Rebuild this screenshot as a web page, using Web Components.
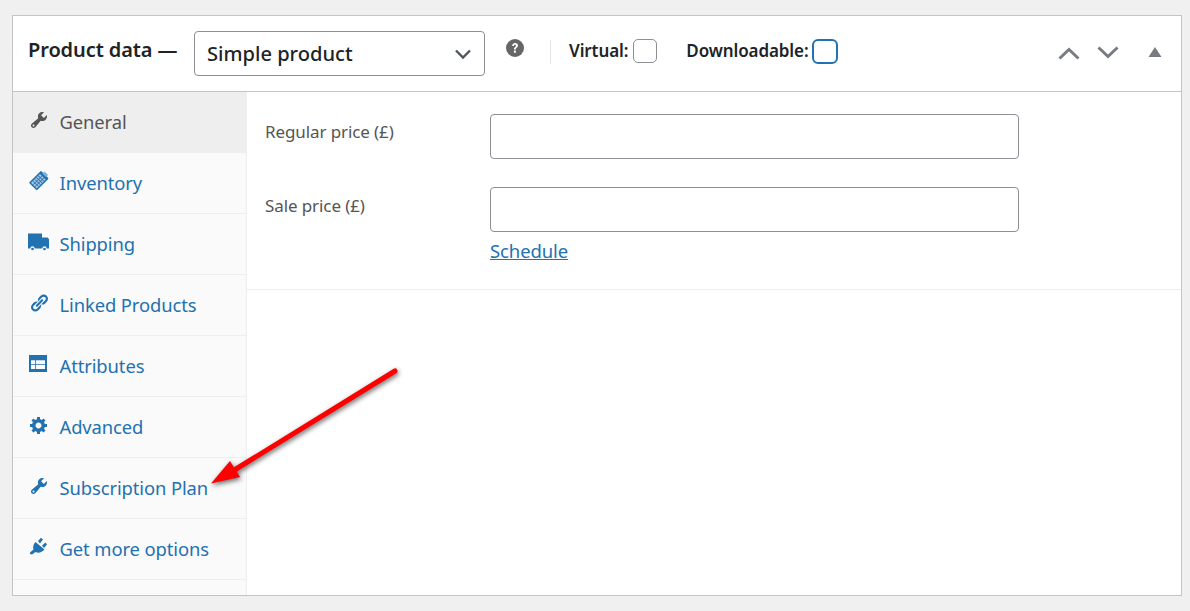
<!DOCTYPE html>
<html><head><meta charset="utf-8">
<style>
html,body{margin:0;padding:0;height:611px;overflow:hidden;background:#f0f0f1;}
body{font-family:"Noto Sans","Open Sans",sans-serif;}
</style></head><body>
<template id="tab-t"><style>
:host{display:flex;box-sizing:border-box;height:61px;align-items:flex-start;padding:0 0 0 16px;border-bottom:1px solid #eee;color:#2271b1;background:#fafafa;font-size:18.4px;}
:host([active]){background:#eee;color:#555;border-bottom-color:#eee}
.i{width:20px;height:20px;margin-top:18px;margin-right:10.5px;flex:none;fill:currentColor;display:block;overflow:visible}
.l{line-height:26px;margin-top:17px;white-space:nowrap;letter-spacing:-.1px}
</style><svg class="i" viewBox="0 0 20 20"></svg><span class="l"><slot></slot></span></template>
<template id="panel-t"><style>
:host{display:block;position:absolute;left:12px;top:15px;width:1170px;height:581px;box-sizing:border-box;border:1px solid #c3c4c7;background:#fff;overflow:visible}
</style><slot></slot></template>
<template id="hdr-t"><style>
:host{display:flex;align-items:flex-start;box-sizing:border-box;height:76px;border-bottom:1px solid #c3c4c7;padding-left:15px;color:#1d2327;background:#fff}
.t{font-size:20px;font-weight:600;line-height:28px;margin-top:20px;white-space:nowrap;letter-spacing:-.1px;width:166px;flex:none}
.sel{box-sizing:border-box;width:291px;height:45px;margin-top:15px;border:1px solid #8c8f94;border-radius:4px;display:flex;align-items:center;padding-left:12px;font-size:20.1px;font-weight:500;justify-content:space-between;flex:none}
.sel svg{margin-right:12px}
.q{margin:23px 0 0 21px;flex:none}
.sep{width:1px;height:24px;background:#e5e5e5;margin:24px 18px 0 26px;flex:none}
.o{display:flex;align-items:center;font-size:17px;font-weight:600;margin-top:23px;height:24px;white-space:nowrap;letter-spacing:-.1px}
.o>span:first-child{margin-top:-2px}
.c{box-sizing:border-box;width:24px;height:24px;border:1px solid #8c8f94;border-radius:5px;margin-left:5px;background:#fff;flex:none}
.c.f{border:2px solid #2271b1;width:26px;height:25px;border-radius:6px;margin-left:4px}
.o.b{margin-left:29px}
.ctl{display:flex;margin-left:auto;margin-right:19px;margin-top:30px}
.ctl svg{display:block}
</style>
<span class="t">Product data —</span>
<div class="sel"><span>Simple product</span><svg width="18" height="12" viewBox="0 0 18 12"><path d="M2 2.500l7 7 7-7" fill="none" stroke="#50575e" stroke-width="2.400"/></svg></div>
<svg class="q" width="18" height="18" viewBox="0 0 18 18"><circle cx="9" cy="9" r="9" fill="#666"/><path d="M6.100 7c.1-1.900 1.400-2.900 3-2.900 1.700 0 2.900 1 2.900 2.500 0 1.100-.6 1.700-1.300 2.200-.6.400-.9.700-.9 1.300v.4H8v-.6c0-1 .5-1.500 1.100-2 .5-.3.800-.6.800-1.100 0-.6-.4-1-1-1s-1 .5-1 1.200zM7.900 11.600h2v2.200h-2z" fill="#fff"/></svg>
<span class="sep"></span>
<div class="o"><span>Virtual:</span><span class="c"></span></div>
<div class="o b"><span>Downloadable:</span><span class="c f"></span></div>
<div class="ctl">
<svg width="22" height="14" viewBox="0 0 22 14"><path d="M1.500 12.500L11 3.500l9.500 9" fill="none" stroke="#787c82" stroke-width="3"/></svg>
<svg width="22" height="14" viewBox="0 0 22 14" style="margin-left:17px"><path d="M1.500 1.500L11 10.500l9.500-9" fill="none" stroke="#787c82" stroke-width="3"/></svg>
<svg width="14" height="10" viewBox="0 0 14 10" style="margin-left:29px;margin-top:1px"><path d="M7 0l6.500 10H.5z" fill="#787c82"/></svg>
</div></template>
<template id="field-t"><style>
:host{display:flex;align-items:flex-start;color:#555;font-size:17px}
.lb{width:225px;flex:none;line-height:22px;margin-top:var(--lb-top,7px);letter-spacing:-.1px}
.in{box-sizing:border-box;width:529px;height:45px;border:1px solid #8c8f94;border-radius:4px;background:#fff}
</style><span class="lb"><slot></slot></span><div><div class="in"></div><slot name="after"></slot></div></template>
<template id="body-t"><style>
:host{display:flex;height:503px;background:#fff}
.side{width:234px;box-sizing:border-box;flex:none;background:#fafafa;border-right:1px solid #eee;}
.main{flex:1;min-width:0}
.grp{box-sizing:border-box;height:198px;border-bottom:1px solid #eee;padding:22px 0 0 18px;display:flex;flex-direction:column;gap:28px}
</style><div class="side"><slot name="tabs"></slot></div><div class="main"><div class="grp"><slot name="fields"></slot></div></div></template>
<template id="arrow-t"><style>
:host{display:block;position:absolute;left:200px;top:360px;width:210px;height:135px;pointer-events:none}
svg{display:block;overflow:visible;filter:drop-shadow(1px 2px 2.500px rgba(0,0,0,.6))}
</style><svg width="210" height="135" viewBox="200 360 210 135"><path d="M395 371L236 469" stroke="#f00" stroke-width="5" stroke-linecap="round" fill="none"/><path d="M211 483.500L230 461L240 477z" fill="#f00"/></svg></template>

<pd-panel>
<pd-header></pd-header>
<pd-body>
<div slot="tabs">
<pd-tab active icon="wrench">General</pd-tab>
<pd-tab icon="inv">Inventory</pd-tab>
<pd-tab icon="truck">Shipping</pd-tab>
<pd-tab icon="link">Linked Products</pd-tab>
<pd-tab icon="attr">Attributes</pd-tab>
<pd-tab icon="gear">Advanced</pd-tab>
<pd-tab icon="wrench">Subscription Plan</pd-tab>
<pd-tab icon="plug">Get more options</pd-tab>
</div>
<pd-field slot="fields">Regular price (£)</pd-field>
<pd-field slot="fields" style="--lb-top:8px">Sale price (£)<pd-link slot="after">Schedule</pd-link></pd-field>
</pd-body>
</pd-panel>
<pd-arrow></pd-arrow>
<script>
const P=d=>`<path fill-rule="evenodd" d="${d}"/>`;
const ICONS={
wrench:P('M16.68 9.77c-1.34 1.34-3.3 1.67-4.95.99l-5.41 6.52c-.99.99-2.59.99-3.58 0s-.99-2.59 0-3.58l6.52-5.41c-.68-1.65-.35-3.61.99-4.95 1.28-1.28 3.12-1.62 4.72-1.06l-2.89 2.89 2.82 2.82 2.86-2.87c.53 1.58.18 3.39-1.08 4.65zM3.81 16.21c.4.39 1.04.39 1.43 0 .4-.4.4-1.04 0-1.43-.39-.4-1.03-.4-1.43 0-.39.39-.39 1.03 0 1.43z'),
inv:`<g transform="rotate(45 9.500 10)"><rect x="4" y="1" width="11" height="17" rx="1"/><rect x="5.500" y="4" width="8" height="12.500" fill="#a9c9e4"/><path d="M5.500 6h8v.8h-8zM5.500 8.500h8v.8h-8zM5.500 11h8v.8h-8zM5.500 13.500h8v.8h-8zM8 4h.8v12.500H8zM10.700 4h.8v12.500h-.8z"/><rect x="7" y="-1" width="5" height="3" fill="#7fb0d8"/></g>`,
truck:P('M-1 1.500h14v4h5.500l1.500 1.500v9.500h-2.300a2.200 2.200 0 0 0-4.400 0H5.700a2.200 2.200 0 0 0-4.400 0H-1z')+'<circle cx="3.500" cy="17" r="1.300"/><circle cx="15.500" cy="17" r="1.300"/>',
link:P('M17.74 2.76c1.68 1.69 1.68 4.41 0 6.1l-1.53 1.52c-1.12 1.12-2.7 1.47-4.14 1.09l2.62-2.61.76-.77.76-.76c.84-.84.84-2.2 0-3.04-.84-.85-2.2-.85-3.04 0l-.77.76-3.38 3.38c-.37-1.44-.02-3.02 1.1-4.14l1.52-1.53c1.69-1.68 4.42-1.68 6.1 0zM8.59 13.43l5.34-5.34c.42-.42.42-1.1 0-1.52-.44-.43-1.13-.39-1.53 0l-5.33 5.34c-.42.42-.42 1.1 0 1.52.44.43 1.13.39 1.52 0zm-.76 2.29l4.14-4.15c.38 1.44.03 3.02-1.09 4.14l-1.52 1.53c-1.69 1.68-4.41 1.68-6.1 0-1.68-1.68-1.68-4.42 0-6.1l1.53-1.52c1.12-1.12 2.7-1.47 4.14-1.1l-4.14 4.15c-.85.84-.85 2.2 0 3.05.84.84 2.2.84 3.04 0z'),
attr:P('M0 1h18v17H0zM2 6.300h4v4H2zM6.800 6.300h9.200v4H6.800zM2 11h4v4H2zM6.800 11h9.200v4H6.800z'),
gear:P('M18 12h-2.18c-.17.7-.44 1.35-.81 1.93l1.54 1.54-2.1 2.1-1.54-1.54c-.58.36-1.23.63-1.91.79V19H8v-2.18c-.68-.16-1.33-.43-1.91-.79l-1.54 1.54-2.12-2.12 1.54-1.54c-.36-.58-.63-1.23-.79-1.91H1V9.03h2.17c.16-.7.44-1.35.8-1.94L2.43 5.55l2.1-2.1 1.54 1.54c.58-.37 1.24-.64 1.93-.81V2h3v2.18c.68.16 1.33.43 1.91.79l1.54-1.54 2.12 2.12-1.54 1.54c.36.59.64 1.24.8 1.94H18V12zm-8.5 1.5c1.66 0 3-1.34 3-3s-1.34-3-3-3-3 1.34-3 3 1.34 3 3 3z'),
plug:P('M6.500 5L15.500 12.500C13 15.500 9.500 16.500 6.500 15L3 17.500L1 17L1 15.500L4.500 12.500C3.500 10 4.500 7 6.500 5zM9 4L12 .8L14 2.500L11 6.500zM13 8.500L16.500 5.500L18 7.500L15 11z')
};
function def(name,tid){customElements.define(name,class extends HTMLElement{constructor(){super();const r=this.attachShadow({mode:'open'});r.appendChild(document.getElementById(tid).content.cloneNode(true));}})}
def('pd-panel','panel-t');def('pd-header','hdr-t');def('pd-body','body-t');def('pd-field','field-t');def('pd-arrow','arrow-t');
customElements.define('pd-tab',class extends HTMLElement{constructor(){super();const r=this.attachShadow({mode:'open'});r.appendChild(document.getElementById('tab-t').content.cloneNode(true));}connectedCallback(){this.shadowRoot.querySelector('svg').innerHTML=ICONS[this.getAttribute('icon')]||''}});
customElements.define('pd-link',class extends HTMLElement{constructor(){super();const r=this.attachShadow({mode:'open'});r.innerHTML='<style>:host{display:block;margin-top:7px}a{color:#2271b1;font-size:18.500px;line-height:24px;text-decoration:underline;letter-spacing:-.1px}</style><a href="#"><slot></slot></a>'}});
</script>
</body></html>
